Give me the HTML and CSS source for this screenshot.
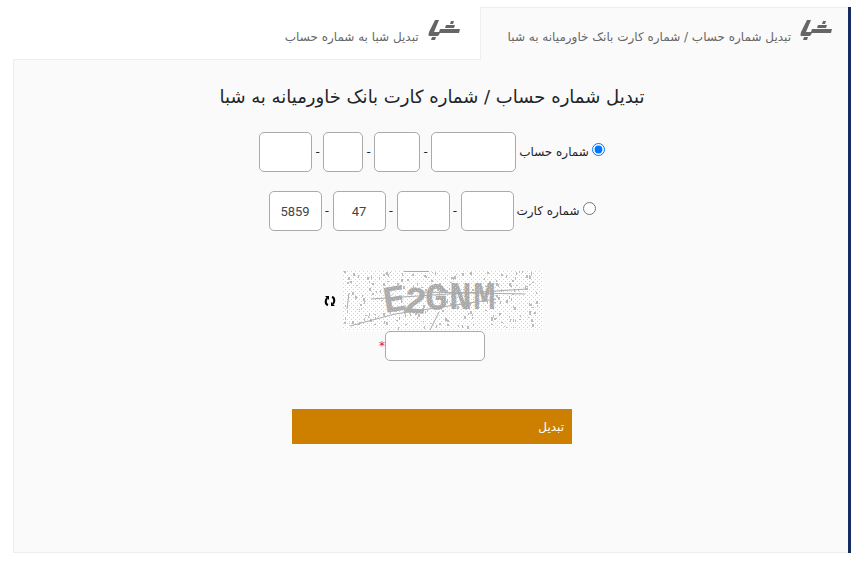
FILE: index.html
```html
<!DOCTYPE html>
<html lang="fa" dir="rtl">
  <head>
    <meta charset="utf-8">
    <title>تبدیل شماره حساب به شبا</title>
    <link rel="stylesheet" href="styles.css">
  </head>
  <body>
    <svg class="defs" aria-hidden="true">
      <symbol id="sheba" viewBox="0 0 32 22">
        <path d="M7 1h4L6 13h5l1-3h20l-1 4H12l-2 3H1q-1-1 0-4zM4 18h4l-1 3H3zM18 6h9l-1 3h-9zM23 2h3l-1 3h-3z"/>
      </symbol>
    </svg>
    <main class="panel">
      <nav class="tabs">
        <a class="tab active" href="#account"><svg class="logo"><use href="#sheba"/></svg>تبدیل شماره حساب / شماره کارت بانک خاورمیانه به شبا</a>
        <a class="tab" href="#sheba-to-account"><svg class="logo"><use href="#sheba"/></svg>تبدیل شبا به شماره حساب</a>
      </nav>
      <form class="content" id="account">
        <h1 class="title">تبدیل شماره حساب / شماره کارت بانک خاورمیانه به شبا</h1>
        <div class="row">
          <input class="radio" type="radio" name="kind" id="kind-account" checked>
          <label class="label" for="kind-account">شماره حساب</label>
          <input class="box w-large" type="text" aria-label="شماره حساب ۱">
          <span class="dash">-</span>
          <input class="box w-medium" type="text" aria-label="شماره حساب ۲">
          <span class="dash">-</span>
          <input class="box w-small" type="text" aria-label="شماره حساب ۳">
          <span class="dash">-</span>
          <input class="box" type="text" aria-label="شماره حساب ۴">
        </div>
        <div class="row">
          <input class="radio" type="radio" name="kind" id="kind-card">
          <label class="label" for="kind-card">شماره کارت</label>
          <input class="box" type="text" aria-label="شماره کارت ۴">
          <span class="dash">-</span>
          <input class="box" type="text" aria-label="شماره کارت ۳">
          <span class="dash">-</span>
          <input class="box" type="text" value="47" aria-label="شماره کارت ۲">
          <span class="dash">-</span>
          <input class="box" type="text" value="5859" aria-label="شماره کارت ۱">
        </div>
        <div class="captcha">
          <svg class="captcha-image" viewBox="0 0 200 60">
            <defs>
              <pattern id="dots" width="4" height="4" patternUnits="userSpaceOnUse">
                <path fill="#d2d2d2" d="M0 0h1v1H0zM2 2h1v1H2z"/>
              </pattern>
              <pattern id="mesh" width="4" height="4" patternUnits="userSpaceOnUse">
                <path fill="#aaa" d="M0 0h4v4H0z"/>
                <path fill="#ccc" d="M0 0h1v1H0zM2 2h1v1H2z"/>
              </pattern>
            </defs>
            <rect width="200" height="60" fill="#fff"/>
            <rect width="200" height="60" fill="url(#dots)"/>
            <g id="noise" fill="#bbb"></g>
            <g class="captcha-text" fill="url(#mesh)">
              <text x="42" y="42" transform="rotate(-9 42 42)">E</text>
              <text x="60" y="41" transform="rotate(5 60 41)">2</text>
              <text x="82" y="39">G</text>
              <text x="106" y="38">N</text>
              <text x="130" y="38">M</text>
            </g>
            <path fill="none" stroke="#aaa" d="M61 .5h25M28 28L184 18M78 21l104 2M7 55l45-12M52 43l101-15M96 41l-9 18M4 38l2-16"/>
          </svg>
          <button class="refresh" type="button" aria-label="تصویر جدید">
            <svg viewBox="0 0 12 12" fill="none" stroke="#000" stroke-width="2">
              <path d="M4 10Q1 9 2 5l1-2M8 2q3 1 2 5L9 9"/>
              <path fill="#000" stroke="none" d="M1 1h4v4L4 4zM11 11H7V7l1 1z"/>
            </svg>
          </button>
        </div>
        <div class="code">
          <input class="box code-input" type="text" aria-label="کد امنیتی">
          <span class="required">*</span>
        </div>
        <button class="submit" type="button">تبدیل</button>
      </form>
    </main>
    <script>
      const noise = document.querySelector("#noise");
      let seed = 17;
      function random(max) {
        seed = (seed * 16807) % 2147483647;
        return Math.floor((seed / 2147483647) * max);
      }
      for (let i = 0; i < 240; i++) {
        const speck = document.createElementNS("http://www.w3.org/2000/svg", "path");
        const w = 1 + random(2);
        const h = 1 + random(3);
        speck.setAttribute("d", `M${random(197)} ${random(57)}h${w}v${h}h-${w}z`);
        noise.appendChild(speck);
      }
    </script>
  </body>
</html>
```
FILE: styles.css
```css
* {
  box-sizing: border-box;
}
body {
  margin: 0;
  padding: 7px 7px 8px 13px;
  background-color: #fff;
  color: #212529;
  font-family: "DejaVu Sans", sans-serif;
  font-size: 12px;
}
.defs {
  display: none;
}
.panel {
  display: flex;
  flex-direction: column;
  min-height: calc(100vh - 15px);
  border-right: 3px solid #162b60;
}
.tabs {
  display: flex;
  height: 53px;
}
.tab {
  display: flex;
  align-items: center;
  flex: 1;
  gap: 9px;
  padding: 7px 20px 0 16px;
  border-bottom: 1px solid #eee;
  color: #666;
  font-size: 12px;
  text-decoration: none;
  white-space: nowrap;
}
.tab.active {
  flex: none;
  padding: 6px 16px 0 27px;
  border-top: 1px solid #eee;
  border-bottom: 0;
  border-left: 1px solid #eee;
  background-color: #fafafa;
}
.logo {
  width: 32px;
  height: 22px;
  margin-bottom: 14px;
  fill: #666;
}
.content {
  display: flex;
  flex-direction: column;
  align-items: center;
  flex: 1;
  padding: 22px 0 22px 2px;
  border-bottom: 1px solid #eee;
  border-left: 1px solid #eee;
  background-color: #fafafa;
}
.title {
  margin: 0 0 20px;
  font-size: 18px;
  font-weight: normal;
  line-height: 30px;
}
.row {
  display: flex;
  align-items: center;
  margin-bottom: 19px;
}
.radio {
  width: 13px;
  height: 13px;
  margin: 0 0 6px 3px;
}
.label {
  margin-left: 3px;
}
.box {
  width: 53px;
  height: 40px;
  padding: 0;
  border: 1px solid #aaa;
  border-radius: 5px;
  background-color: #fff;
  color: #444;
  font-family: Roboto, sans-serif;
  font-size: 13px;
  text-align: center;
}
.w-large {
  width: 85px;
}
.w-medium {
  width: 46px;
}
.w-small {
  width: 40px;
}
.dash {
  width: 11px;
  text-align: center;
}
.captcha {
  display: flex;
  align-items: center;
  gap: 7px;
  margin-top: 21px;
  padding-left: 3px;
}
.captcha-image {
  width: 200px;
  height: 60px;
}
.captcha-text {
  font-family: "Liberation Mono", monospace;
  font-size: 38px;
  font-weight: bold;
  direction: ltr;
}
.refresh {
  width: 12px;
  height: 12px;
  padding: 0;
  border: 0;
  background: none;
  cursor: pointer;
}
.refresh svg {
  display: block;
}
.code {
  display: flex;
  align-items: center;
}
.code-input {
  width: 100px;
  height: 30px;
}
.required {
  color: #e02020;
}
.submit {
  width: 280px;
  height: 35px;
  margin-top: 48px;
  padding: 0 8px;
  border: 0;
  background-color: #cd7f00;
  color: #fff;
  font-family: inherit;
  font-size: 12px;
  text-align: right;
  cursor: pointer;
}
```
